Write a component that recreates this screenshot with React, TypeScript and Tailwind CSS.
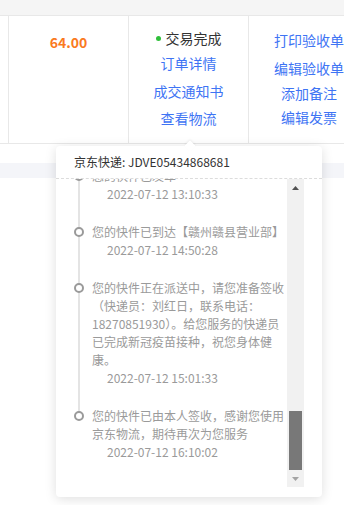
import React from 'react';

type Track = { lines: string[]; time: string };

const tracks: Track[] = [
  { lines: ['您的快件已发车'], time: '2022-07-12 13:10:33' },
  { lines: ['您的快件已到达【赣州赣县营业部】'], time: '2022-07-12 14:50:28' },
  {
    lines: [
      '您的快件正在派送中，请您准备签收',
      '（快递员：刘红日，联系电话：',
      '18270851930）。给您服务的快递员',
      '已完成新冠疫苗接种，祝您身体健',
      '康。',
    ],
    time: '2022-07-12 15:01:33',
  },
  { lines: ['您的快件已由本人签收，感谢您使用', '京东物流，期待再次为您服务'], time: '2022-07-12 16:10:02' },
];

const Link = ({ children, className = '' }: { children: React.ReactNode; className?: string }) => (
  <a className={`block text-sm leading-5 text-[#3e74f4] whitespace-nowrap cursor-pointer ${className}`}>{children}</a>
);

const TrackItem = ({ item, last }: { item: Track; last: boolean }) => (
  <div className="relative pb-[20px] pl-[18px] text-xs leading-[18px] text-[#9a9a9a]">
    {!last && <div className="absolute left-[4px] top-[9px] -bottom-[9px] w-[2px] bg-[#e4e4e4]" />}
    <div className="absolute left-0 top-[4px] w-[10px] h-[10px] rounded-full border-2 border-[#9a9a9a] bg-white" />
    {item.lines.map((l, i) => (
      <div key={i} className="whitespace-nowrap">{l}</div>
    ))}
    <div className="pl-[15px] whitespace-nowrap">{item.time}</div>
  </div>
);

export default function App() {
  return (
    <div className="relative w-[344px] h-[505px] overflow-hidden bg-white font-['Noto_Sans_CJK_SC',sans-serif]">
      {/* table header strip */}
      <div className="h-[16px] bg-[#f5f5f5] border-b border-[#e8e8e8]" />

      {/* order row */}
      <div className="flex h-[128px] border-b border-[#e8e8e8]">
        <div className="w-[9px] shrink-0 border-r border-[#e8e8e8]" />
        <div className="w-[120px] shrink-0 border-r border-[#e8e8e8] pt-[13px] text-center">
          <span className="text-sm leading-5 font-bold text-[#fa7a1e]">64.00</span>
        </div>
        <div className="w-[120px] shrink-0 border-r border-[#e8e8e8] pt-[12px] flex flex-col items-center">
          <div className="flex items-center text-sm leading-5 text-[#333]">
            <span className="w-[5px] h-[5px] rounded-full bg-[#2fbf3a] mr-[5px]" />
            交易完成
          </div>
          <Link className="mt-[5px]">订单详情</Link>
          <Link className="mt-[8px]">成交通知书</Link>
          <Link className="mt-[7px]">查看物流</Link>
        </div>
        <div className="w-[120px] shrink-0 pt-[14px] flex flex-col items-center">
          <Link>打印验收单</Link>
          <Link className="mt-[8px]">编辑验收单</Link>
          <Link className="mt-[5px]">添加备注</Link>
          <Link className="mt-[4px]">编辑发票</Link>
        </div>
      </div>

      <div className="h-[19px]" />
      <div className="h-[15px] bg-[#f4f5f9]" />

      {/* logistics popover */}
      <div className="absolute left-[56px] top-[146px] w-[266px] h-[351px] rounded-[4px] bg-white shadow-[0_2px_12px_rgba(0,0,0,0.13)]">
        <div className="absolute left-[130px] -top-[4px] w-[8px] h-[8px] rotate-45 bg-white shadow-[-1px_-1px_2px_rgba(0,0,0,0.06)]" />
        <div className="relative h-[33px] flex items-center pl-[18px] text-xs text-[#333] border-b border-dashed border-[#dcdcdc]">
          京东快递: JDVE05434868681
        </div>
        <div className="flex h-[308px] mr-[18px]">
          <div className="flex-1 overflow-hidden pl-[18px]">
            <div className="-mt-[12px]">
              {tracks.map((t, i) => (
                <TrackItem key={i} item={t} last={i === tracks.length - 1} />
              ))}
            </div>
          </div>
          <div className="w-[17px] bg-[#f1f1f1] flex flex-col">
            <div className="h-[17px] flex items-center justify-center">
              <svg width="7" height="4" viewBox="0 0 7 4"><polygon points="3.5,0 7,4 0,4" fill="#505050" /></svg>
            </div>
            <div className="flex-1 flex flex-col justify-end">
              <div className="h-[59px] mx-[2px] bg-[#787878]" />
            </div>
            <div className="h-[17px] flex items-center justify-center">
              <svg width="7" height="4" viewBox="0 0 7 4"><polygon points="0,0 7,0 3.5,4" fill="#a3a3a3" /></svg>
            </div>
          </div>
        </div>
      </div>
    </div>
  );
}
